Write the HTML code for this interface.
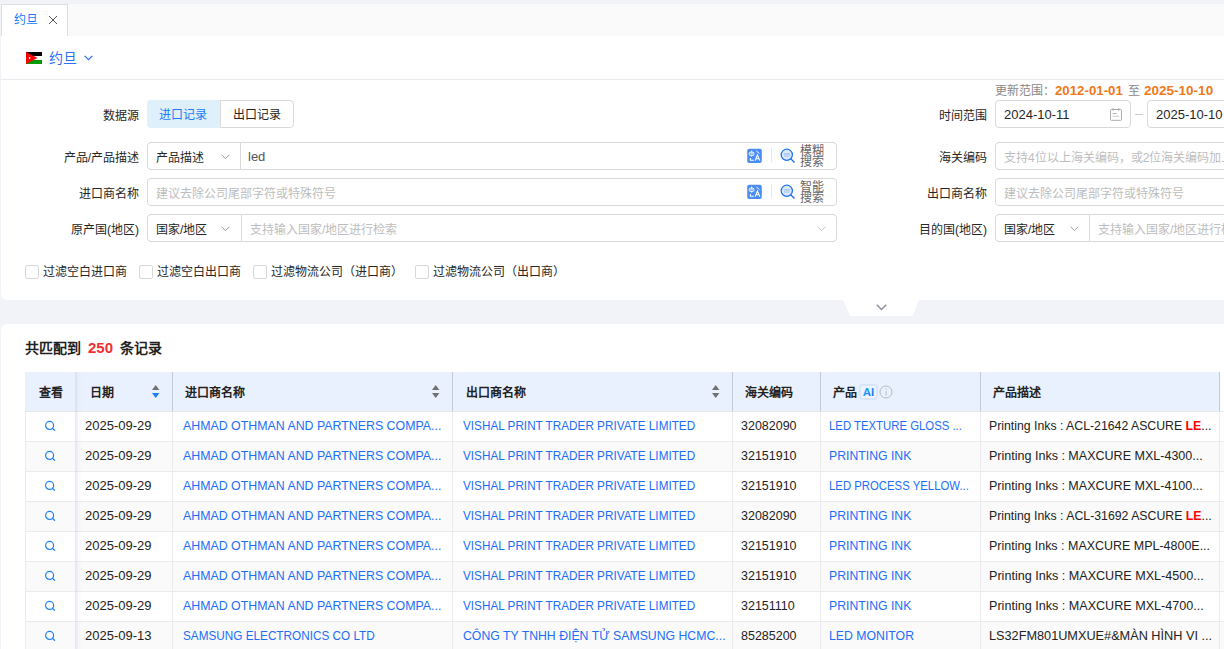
<!DOCTYPE html>
<html lang="zh-CN"><head><meta charset="utf-8">
<style>
*{box-sizing:border-box;margin:0;padding:0}
html,body{width:1224px;height:649px;overflow:hidden}
body{background:#f2f3f8;font-family:"Liberation Sans",sans-serif;font-size:12px;color:#262626;position:relative}
.a{position:absolute;white-space:nowrap;transform-origin:0 50%;line-height:16px}
.tabbar{position:absolute;left:1px;top:4px;width:1223px;height:32px;background:#fafafa}
.tab{position:absolute;left:1px;top:4px;width:67px;height:33px;background:#fff;border:1px solid #dedede;border-bottom:none}
.panel1{position:absolute;left:1px;top:36px;width:1240px;height:264px;background:#fff;border-radius:0 0 6px 6px}
.panel2{position:absolute;left:1px;top:324px;width:1240px;height:400px;background:#fff;border-radius:6px 6px 0 0}
.hline{position:absolute;left:1px;top:79px;width:1223px;height:1px;background:#ebebef}
.lbl{position:absolute;text-align:right;color:#262626;font-size:12px;line-height:32px;height:28px;white-space:nowrap}
.box{position:absolute;height:28px;border:1px solid #d9d9d9;border-radius:4px;background:#fff}
.ph{color:#bdbdbd}
.chev{position:absolute;width:7px;height:7px;border-right:1px solid #9a9ca5;border-bottom:1px solid #9a9ca5;transform:rotate(45deg)}
.cb{position:absolute;width:14px;height:14px;border:1px solid #d9d9d9;border-radius:2px;background:#fff}
.tbl{position:absolute;left:25px;top:372px;width:1240px;border-collapse:collapse;table-layout:fixed}
.tbl th{height:39px;background:#ebf1fd;font-weight:bold;text-align:left;font-size:12px;color:#222;padding:0 0 0 13px;position:relative}
.tbl td{height:30px;font-size:13px;color:#222;padding:0 0 0 9px;border-bottom:1px solid #ececf0;border-right:1px solid #ececf0;white-space:nowrap;overflow:hidden}
.tbl tr:nth-child(odd) td{background:#fafafa}

.th{font-weight:bold;font-size:12px;color:#222}
.td{font-size:13px;color:#222}
.hl{color:#f00}
.td.lk{color:#1d6ef7}
</style></head><body>
<div class="tabbar"></div>
<div class="tab"></div>
<div class="a" style="left:14px;top:12px;font-size:12px;color:#1677ff">约旦</div>
<svg class="a" style="left:48px;top:15px" width="10" height="10" viewBox="0 0 10 10"><path d="M1,1 L9,9 M9,1 L1,9" stroke="#555" stroke-width="1" fill="none"/></svg>
<div class="panel1"></div>
<div class="panel2"></div>
<div class="hline"></div>

<!-- flag -->
<svg class="a" style="left:26px;top:52px" width="16" height="12" viewBox="0 0 16 12">
<rect width="16" height="4" fill="#000"/><rect y="4" width="16" height="4" fill="#fff"/><rect y="8" width="16" height="4" fill="#090"/>
<polygon points="0,0 11.5,6 0,12" fill="#f00"/><circle cx="3.6" cy="6" r="0.9" fill="#fff"/></svg>
<div class="a" style="left:49px;top:50px;font-size:14px;color:#2a6ff5">约旦</div>
<svg class="a" style="left:84px;top:55px" width="9" height="6" viewBox="0 0 9 6"><polyline points="0.7,0.8 4.5,4.6 8.3,0.8" stroke="#2a6ff5" stroke-width="1.2" fill="none"/></svg>

<!-- left form -->
<div class="lbl" style="left:0;width:139px;top:100px">数据源</div>
<div class="a" style="left:147px;top:100px;width:73px;height:28px;background:#dff0fa;border-radius:4px 0 0 4px"></div>
<div class="a" style="left:159px;top:107px;color:#1a7cf5">进口记录</div>
<div class="box" style="left:220px;top:100px;width:74px;border-radius:0 4px 4px 0;border-color:#d9d9d9"></div>
<div class="a" style="left:233px;top:107px;color:#222">出口记录</div>

<div class="lbl" style="left:0;width:139px;top:142px">产品/产品描述</div>
<div class="box" style="left:147px;top:142px;width:690px">
  <div class="a" style="left:8px;top:7px">产品描述</div>
  <svg class="a" style="left:73px;top:11px" width="9" height="6" viewBox="0 0 9 6"><polyline points="0.6,0.7 4.5,4.6 8.4,0.7" stroke="#9a9ca5" stroke-width="1" fill="none"/></svg>
  <div class="a" style="left:92px;top:-1px;width:1px;height:28px;background:#d9d9d9"></div>
  <div class="a" style="left:100px;top:6px;font-size:13px;color:#555">led</div>
  <svg class="a" style="left:599px;top:5px" width="16" height="16" viewBox="0 0 16 16"><rect x="0.2" y="0.7" width="14.6" height="14.4" rx="2" fill="#4b8cf5"/><rect x="2.3" y="4.2" width="4.6" height="3.2" rx="1" fill="none" stroke="#fff" stroke-width="1"/><path d="M4.6,2.6 V4.2 M4.6,7.4 V8.6 M3.3,5.8 H5.9" stroke="#fff" stroke-width="0.9" fill="none"/><path d="M3.4,10 V12.3 H6.8" stroke="#fff" stroke-width="1.1" fill="none"/><path d="M9.4,3 L12.4,5.6" stroke="#fff" stroke-width="1" fill="none"/><path d="M8.2,12.6 L10.4,7 L12.8,12.6 M9,10.8 H11.9" stroke="#fff" stroke-width="1.1" fill="none"/></svg>
  <div class="a" style="left:623px;top:5px;width:1px;height:14px;background:#e6e7eb"></div>
  <svg class="a" style="left:632px;top:5px" width="16" height="16" viewBox="0 0 16 16"><circle cx="6.8" cy="6.8" r="5.6" fill="#dce9fd" stroke="#1f72f0" stroke-width="1.3"/><path d="M3.8,5.8 H9.8 M3.8,8 H9.8" stroke="#9fbff5" stroke-width="1.2"/><line x1="10.8" y1="10.8" x2="14.5" y2="14.5" stroke="#1f72f0" stroke-width="1.4"/></svg>
  <div class="a" style="left:652px;top:3px;font-size:12px;line-height:11px;color:#666;white-space:normal;width:26px">模糊<br>搜索</div>
</div>

<div class="lbl" style="left:0;width:139px;top:178px">进口商名称</div>
<div class="box" style="left:147px;top:178px;width:690px">
  <div class="a ph" style="left:8px;top:7px">建议去除公司尾部字符或特殊符号</div>
  <svg class="a" style="left:599px;top:5px" width="16" height="16" viewBox="0 0 16 16"><rect x="0.2" y="0.7" width="14.6" height="14.4" rx="2" fill="#4b8cf5"/><rect x="2.3" y="4.2" width="4.6" height="3.2" rx="1" fill="none" stroke="#fff" stroke-width="1"/><path d="M4.6,2.6 V4.2 M4.6,7.4 V8.6 M3.3,5.8 H5.9" stroke="#fff" stroke-width="0.9" fill="none"/><path d="M3.4,10 V12.3 H6.8" stroke="#fff" stroke-width="1.1" fill="none"/><path d="M9.4,3 L12.4,5.6" stroke="#fff" stroke-width="1" fill="none"/><path d="M8.2,12.6 L10.4,7 L12.8,12.6 M9,10.8 H11.9" stroke="#fff" stroke-width="1.1" fill="none"/></svg>
  <div class="a" style="left:623px;top:5px;width:1px;height:14px;background:#e6e7eb"></div>
  <svg class="a" style="left:632px;top:5px" width="16" height="16" viewBox="0 0 16 16"><circle cx="6.8" cy="6.8" r="5.6" fill="#dce9fd" stroke="#1f72f0" stroke-width="1.3"/><path d="M3.8,5.8 H9.8 M3.8,8 H9.8" stroke="#9fbff5" stroke-width="1.2"/><line x1="10.8" y1="10.8" x2="14.5" y2="14.5" stroke="#1f72f0" stroke-width="1.4"/></svg>
  <div class="a" style="left:652px;top:3px;font-size:12px;line-height:11px;color:#666;white-space:normal;width:26px">智能<br>搜索</div>
</div>

<div class="lbl" style="left:0;width:139px;top:214px">原产国(地区)</div>
<div class="box" style="left:147px;top:214px;width:690px">
  <div class="a" style="left:8px;top:7px">国家/地区</div>
  <svg class="a" style="left:73px;top:11px" width="9" height="6" viewBox="0 0 9 6"><polyline points="0.6,0.7 4.5,4.6 8.4,0.7" stroke="#9a9ca5" stroke-width="1" fill="none"/></svg>
  <div class="a" style="left:93px;top:-1px;width:1px;height:28px;background:#d9d9d9"></div>
  <div class="a ph" style="left:102px;top:7px">支持输入国家/地区进行检索</div>
  <svg class="a" style="left:669px;top:11px" width="9" height="6" viewBox="0 0 9 6"><polyline points="0.6,0.7 4.5,4.6 8.4,0.7" stroke="#c3c5cc" stroke-width="1" fill="none"/></svg>
</div>

<!-- right form -->
<div class="a" style="left:995px;top:83px;color:#888">更新范围：</div>
<div class="a" style="left:1055px;top:83px;color:#f07818;font-size:13px;font-weight:bold;transform:scaleX(1.02)">2012-01-01</div>
<div class="a" style="left:1128px;top:83px;color:#888">至</div>
<div class="a" style="left:1144px;top:83px;color:#f07818;font-size:13px;font-weight:bold;transform:scaleX(1.04)">2025-10-10</div>
<div class="lbl" style="left:880px;width:107px;top:100px">时间范围</div>
<div class="box" style="left:995px;top:100px;width:136px">
  <div class="a" style="left:8px;top:6px;font-size:13px">2024-10-11</div>
  <svg class="a" style="left:114px;top:7px" width="13" height="13" viewBox="0 0 13 13"><rect x="0.5" y="1.5" width="11" height="10.8" rx="0.8" fill="none" stroke="#a9a9ad" stroke-width="1"/><path d="M3,0.3 V2.5 M8.6,0.3 V2.5" stroke="#a9a9ad" stroke-width="1.2"/><path d="M2.6,5.5 H6.6" stroke="#a9a9ad" stroke-width="0.9"/><path d="M2.6,8.2 H9.2" stroke="#c4c4c8" stroke-width="0.9"/></svg>
</div>
<div class="a" style="left:1135px;top:114px;width:8px;height:1px;background:#ccc"></div>
<div class="box" style="left:1147px;top:100px;width:120px">
  <div class="a" style="left:8px;top:6px;font-size:13px">2025-10-10</div>
</div>
<div class="lbl" style="left:880px;width:107px;top:142px">海关编码</div>
<div class="box" style="left:995px;top:142px;width:260px">
  <div class="a ph" style="left:8px;top:7px">支持4位以上海关编码，或2位海关编码加上</div>
</div>
<div class="lbl" style="left:880px;width:107px;top:178px">出口商名称</div>
<div class="box" style="left:995px;top:178px;width:260px">
  <div class="a ph" style="left:8px;top:7px">建议去除公司尾部字符或特殊符号</div>
</div>
<div class="lbl" style="left:880px;width:107px;top:214px">目的国(地区)</div>
<div class="box" style="left:995px;top:214px;width:260px">
  <div class="a" style="left:8px;top:7px">国家/地区</div>
  <svg class="a" style="left:74px;top:11px" width="9" height="6" viewBox="0 0 9 6"><polyline points="0.6,0.7 4.5,4.6 8.4,0.7" stroke="#9a9ca5" stroke-width="1" fill="none"/></svg>
  <div class="a" style="left:93px;top:-1px;width:1px;height:28px;background:#d9d9d9"></div>
  <div class="a ph" style="left:102px;top:7px">支持输入国家/地区进行检索</div>
</div>

<!-- checkboxes -->
<div class="cb" style="left:25px;top:265px"></div><div class="a" style="left:43px;top:264px">过滤空白进口商</div>
<div class="cb" style="left:139px;top:265px"></div><div class="a" style="left:157px;top:264px">过滤空白出口商</div>
<div class="cb" style="left:253px;top:265px"></div><div class="a" style="left:271px;top:264px">过滤物流公司（进口商）</div>
<div class="cb" style="left:415px;top:265px"></div><div class="a" style="left:433px;top:264px">过滤物流公司（出口商）</div>

<!-- notch -->
<svg class="a" style="left:843px;top:300px" width="76" height="16" viewBox="0 0 76 16"><polygon points="0,0 76,0 69.5,16 7,16" fill="#fff"/></svg>
<svg class="a" style="left:876px;top:304px" width="11" height="7" viewBox="0 0 11 7"><polyline points="0.8,0.8 5.5,5.5 10.2,0.8" stroke="#8a8aa0" stroke-width="1.4" fill="none"/></svg>

<!-- results -->
<div class="a" style="left:25px;top:340px;font-size:14px;font-weight:bold;color:#1f1f1f">共匹配到<span style="color:#f03030;font-size:15px;margin:0 7px 0 7px">250</span>条记录</div>

<!--TABLE-->
<div class="a" style="left:25px;top:372px;width:1195px;height:39px;background:#e9f0fe"></div>
<div class="a" style="left:172px;top:372px;width:1px;height:39px;background:#c5c9d3"></div>
<div class="a" style="left:452px;top:372px;width:1px;height:39px;background:#c5c9d3"></div>
<div class="a" style="left:732px;top:372px;width:1px;height:39px;background:#c5c9d3"></div>
<div class="a" style="left:820px;top:372px;width:1px;height:39px;background:#c5c9d3"></div>
<div class="a" style="left:980px;top:372px;width:1px;height:39px;background:#c5c9d3"></div>
<div class="a" style="left:1219px;top:372px;width:1px;height:39px;background:#c5c9d3"></div>
<div class="a th" style="left:39px;top:385px">查看</div>
<div class="a th" style="left:90px;top:385px">日期</div>
<div class="a th" style="left:185px;top:385px">进口商名称</div>
<div class="a th" style="left:466px;top:385px">出口商名称</div>
<div class="a th" style="left:745px;top:385px">海关编码</div>
<div class="a th" style="left:833px;top:385px">产品</div>
<div class="a th" style="left:993px;top:385px">产品描述</div>
<svg class="a" style="left:152px;top:384px" width="8" height="15" viewBox="0 0 8 15"><polygon points="3.7,0.9 7.4,5.9 0,5.9" fill="#707070"/><polygon points="0,9 7.4,9 3.7,14" fill="#1d80f2"/></svg>
<svg class="a" style="left:432px;top:384px" width="8" height="15" viewBox="0 0 8 15"><polygon points="3.7,0.9 7.4,5.9 0,5.9" fill="#707070"/><polygon points="0,9 7.4,9 3.7,14" fill="#707070"/></svg>
<svg class="a" style="left:712px;top:384px" width="8" height="15" viewBox="0 0 8 15"><polygon points="3.7,0.9 7.4,5.9 0,5.9" fill="#707070"/><polygon points="0,9 7.4,9 3.7,14" fill="#707070"/></svg>
<svg class="a" style="left:859px;top:384px" width="19" height="16" viewBox="0 0 19 16"><defs><linearGradient id="aig" x1="0" y1="0" x2="1" y2="1"><stop offset="0" stop-color="#16c2f0"/><stop offset="1" stop-color="#1d5cf5"/></linearGradient></defs><rect x="1" y="1" width="17" height="14" rx="2" fill="#eef4ff" stroke="#c9dafc" stroke-width="1"/><text x="9.5" y="12.3" text-anchor="middle" font-family="Liberation Sans" font-weight="bold" font-size="11.5" fill="url(#aig)">AI</text></svg>
<svg class="a" style="left:879px;top:385px" width="14" height="14" viewBox="0 0 14 14"><circle cx="7" cy="7" r="6" fill="none" stroke="#b8bbc4" stroke-width="1"/><rect x="6.5" y="6" width="1" height="4.5" fill="#b8bbc4"/><rect x="6.5" y="3.5" width="1" height="1.2" fill="#b8bbc4"/></svg>
<div class="a" style="left:25px;top:411px;width:1240px;height:1px;background:#e6e7ea"></div>
<div class="a" style="left:25px;top:412px;width:1240px;height:29px;background:#fff"></div>
<div class="a" style="left:25px;top:441px;width:1240px;height:1px;background:#ebebef"></div>
<div class="a" style="left:25px;top:442px;width:1240px;height:29px;background:#fafafa"></div>
<div class="a" style="left:25px;top:471px;width:1240px;height:1px;background:#ebebef"></div>
<div class="a" style="left:25px;top:472px;width:1240px;height:29px;background:#fff"></div>
<div class="a" style="left:25px;top:501px;width:1240px;height:1px;background:#ebebef"></div>
<div class="a" style="left:25px;top:502px;width:1240px;height:29px;background:#fafafa"></div>
<div class="a" style="left:25px;top:531px;width:1240px;height:1px;background:#ebebef"></div>
<div class="a" style="left:25px;top:532px;width:1240px;height:29px;background:#fff"></div>
<div class="a" style="left:25px;top:561px;width:1240px;height:1px;background:#ebebef"></div>
<div class="a" style="left:25px;top:562px;width:1240px;height:29px;background:#fafafa"></div>
<div class="a" style="left:25px;top:591px;width:1240px;height:1px;background:#ebebef"></div>
<div class="a" style="left:25px;top:592px;width:1240px;height:29px;background:#fff"></div>
<div class="a" style="left:25px;top:621px;width:1240px;height:1px;background:#ebebef"></div>
<div class="a" style="left:25px;top:622px;width:1240px;height:29px;background:#fafafa"></div>
<div class="a" style="left:25px;top:651px;width:1240px;height:1px;background:#ebebef"></div>
<div class="a" style="left:25px;top:411px;width:1px;height:240px;background:#ebebef"></div>
<div class="a" style="left:172px;top:411px;width:1px;height:240px;background:#ebebef"></div>
<div class="a" style="left:452px;top:411px;width:1px;height:240px;background:#ebebef"></div>
<div class="a" style="left:732px;top:411px;width:1px;height:240px;background:#ebebef"></div>
<div class="a" style="left:820px;top:411px;width:1px;height:240px;background:#ebebef"></div>
<div class="a" style="left:980px;top:411px;width:1px;height:240px;background:#ebebef"></div>
<div class="a" style="left:1219px;top:411px;width:1px;height:240px;background:#ebebef"></div>
<div class="a" style="left:75px;top:372px;width:7px;height:280px;background:linear-gradient(to right,rgba(200,203,220,0.45),rgba(220,222,235,0.15) 50%,rgba(230,232,240,0))"></div>
<svg class="a" style="left:44px;top:420px" width="12" height="12" viewBox="0 0 12 12"><circle cx="5.6" cy="5.4" r="4" fill="none" stroke="#1a80f5" stroke-width="1.2"/><line x1="8.4" y1="8.2" x2="10.6" y2="10.4" stroke="#1a80f5" stroke-width="1.3" stroke-linecap="round"/></svg>
<div class="a td " style="left:85px;top:418px">2025-09-29</div>
<div class="a td lk" style="left:183px;top:418px;transform:scaleX(0.9513)">AHMAD OTHMAN AND PARTNERS COMPA...</div>
<div class="a td lk" style="left:463px;top:418px;transform:scaleX(0.9027)">VISHAL PRINT TRADER PRIVATE LIMITED</div>
<div class="a td" style="left:741px;top:418px;transform:scaleX(0.96)">32082090</div>
<div class="a td lk" style="left:829px;top:418px;transform:scaleX(0.8733)">LED TEXTURE GLOSS ...</div>
<div class="a td " style="left:989px;top:418px;transform:scaleX(0.9444)">Printing Inks : ACL-21642 ASCURE <b style="color:#f00">LE</b>...</div>
<svg class="a" style="left:44px;top:450px" width="12" height="12" viewBox="0 0 12 12"><circle cx="5.6" cy="5.4" r="4" fill="none" stroke="#1a80f5" stroke-width="1.2"/><line x1="8.4" y1="8.2" x2="10.6" y2="10.4" stroke="#1a80f5" stroke-width="1.3" stroke-linecap="round"/></svg>
<div class="a td " style="left:85px;top:448px">2025-09-29</div>
<div class="a td lk" style="left:183px;top:448px;transform:scaleX(0.9513)">AHMAD OTHMAN AND PARTNERS COMPA...</div>
<div class="a td lk" style="left:463px;top:448px;transform:scaleX(0.9027)">VISHAL PRINT TRADER PRIVATE LIMITED</div>
<div class="a td" style="left:741px;top:448px;transform:scaleX(0.96)">32151910</div>
<div class="a td lk" style="left:829px;top:448px;transform:scaleX(0.9419)">PRINTING INK</div>
<div class="a td " style="left:989px;top:448px;transform:scaleX(0.9636)">Printing Inks : MAXCURE MXL-4300...</div>
<svg class="a" style="left:44px;top:480px" width="12" height="12" viewBox="0 0 12 12"><circle cx="5.6" cy="5.4" r="4" fill="none" stroke="#1a80f5" stroke-width="1.2"/><line x1="8.4" y1="8.2" x2="10.6" y2="10.4" stroke="#1a80f5" stroke-width="1.3" stroke-linecap="round"/></svg>
<div class="a td " style="left:85px;top:478px">2025-09-29</div>
<div class="a td lk" style="left:183px;top:478px;transform:scaleX(0.9513)">AHMAD OTHMAN AND PARTNERS COMPA...</div>
<div class="a td lk" style="left:463px;top:478px;transform:scaleX(0.9027)">VISHAL PRINT TRADER PRIVATE LIMITED</div>
<div class="a td" style="left:741px;top:478px;transform:scaleX(0.96)">32151910</div>
<div class="a td lk" style="left:829px;top:478px;transform:scaleX(0.8734)">LED PROCESS YELLOW...</div>
<div class="a td " style="left:989px;top:478px;transform:scaleX(0.9636)">Printing Inks : MAXCURE MXL-4100...</div>
<svg class="a" style="left:44px;top:510px" width="12" height="12" viewBox="0 0 12 12"><circle cx="5.6" cy="5.4" r="4" fill="none" stroke="#1a80f5" stroke-width="1.2"/><line x1="8.4" y1="8.2" x2="10.6" y2="10.4" stroke="#1a80f5" stroke-width="1.3" stroke-linecap="round"/></svg>
<div class="a td " style="left:85px;top:508px">2025-09-29</div>
<div class="a td lk" style="left:183px;top:508px;transform:scaleX(0.9513)">AHMAD OTHMAN AND PARTNERS COMPA...</div>
<div class="a td lk" style="left:463px;top:508px;transform:scaleX(0.9027)">VISHAL PRINT TRADER PRIVATE LIMITED</div>
<div class="a td" style="left:741px;top:508px;transform:scaleX(0.96)">32082090</div>
<div class="a td lk" style="left:829px;top:508px;transform:scaleX(0.9419)">PRINTING INK</div>
<div class="a td " style="left:989px;top:508px;transform:scaleX(0.9457)">Printing Inks : ACL-31692 ASCURE <b style="color:#f00">LE</b>...</div>
<svg class="a" style="left:44px;top:540px" width="12" height="12" viewBox="0 0 12 12"><circle cx="5.6" cy="5.4" r="4" fill="none" stroke="#1a80f5" stroke-width="1.2"/><line x1="8.4" y1="8.2" x2="10.6" y2="10.4" stroke="#1a80f5" stroke-width="1.3" stroke-linecap="round"/></svg>
<div class="a td " style="left:85px;top:538px">2025-09-29</div>
<div class="a td lk" style="left:183px;top:538px;transform:scaleX(0.9513)">AHMAD OTHMAN AND PARTNERS COMPA...</div>
<div class="a td lk" style="left:463px;top:538px;transform:scaleX(0.9027)">VISHAL PRINT TRADER PRIVATE LIMITED</div>
<div class="a td" style="left:741px;top:538px;transform:scaleX(0.96)">32151910</div>
<div class="a td lk" style="left:829px;top:538px;transform:scaleX(0.9419)">PRINTING INK</div>
<div class="a td " style="left:989px;top:538px;transform:scaleX(0.9590)">Printing Inks : MAXCURE MPL-4800E...</div>
<svg class="a" style="left:44px;top:570px" width="12" height="12" viewBox="0 0 12 12"><circle cx="5.6" cy="5.4" r="4" fill="none" stroke="#1a80f5" stroke-width="1.2"/><line x1="8.4" y1="8.2" x2="10.6" y2="10.4" stroke="#1a80f5" stroke-width="1.3" stroke-linecap="round"/></svg>
<div class="a td " style="left:85px;top:568px">2025-09-29</div>
<div class="a td lk" style="left:183px;top:568px;transform:scaleX(0.9513)">AHMAD OTHMAN AND PARTNERS COMPA...</div>
<div class="a td lk" style="left:463px;top:568px;transform:scaleX(0.9027)">VISHAL PRINT TRADER PRIVATE LIMITED</div>
<div class="a td" style="left:741px;top:568px;transform:scaleX(0.96)">32151910</div>
<div class="a td lk" style="left:829px;top:568px;transform:scaleX(0.9419)">PRINTING INK</div>
<div class="a td " style="left:989px;top:568px;transform:scaleX(0.9682)">Printing Inks : MAXCURE MXL-4500...</div>
<svg class="a" style="left:44px;top:600px" width="12" height="12" viewBox="0 0 12 12"><circle cx="5.6" cy="5.4" r="4" fill="none" stroke="#1a80f5" stroke-width="1.2"/><line x1="8.4" y1="8.2" x2="10.6" y2="10.4" stroke="#1a80f5" stroke-width="1.3" stroke-linecap="round"/></svg>
<div class="a td " style="left:85px;top:598px">2025-09-29</div>
<div class="a td lk" style="left:183px;top:598px;transform:scaleX(0.9513)">AHMAD OTHMAN AND PARTNERS COMPA...</div>
<div class="a td lk" style="left:463px;top:598px;transform:scaleX(0.9027)">VISHAL PRINT TRADER PRIVATE LIMITED</div>
<div class="a td" style="left:741px;top:598px;transform:scaleX(0.96)">32151110</div>
<div class="a td lk" style="left:829px;top:598px;transform:scaleX(0.9419)">PRINTING INK</div>
<div class="a td " style="left:989px;top:598px;transform:scaleX(0.9682)">Printing Inks : MAXCURE MXL-4700...</div>
<svg class="a" style="left:44px;top:630px" width="12" height="12" viewBox="0 0 12 12"><circle cx="5.6" cy="5.4" r="4" fill="none" stroke="#1a80f5" stroke-width="1.2"/><line x1="8.4" y1="8.2" x2="10.6" y2="10.4" stroke="#1a80f5" stroke-width="1.3" stroke-linecap="round"/></svg>
<div class="a td " style="left:85px;top:628px">2025-09-13</div>
<div class="a td lk" style="left:183px;top:628px;transform:scaleX(0.9038)">SAMSUNG ELECTRONICS CO LTD</div>
<div class="a td lk" style="left:463px;top:628px;transform:scaleX(0.9440)">CÔNG TY TNHH ĐIỆN TỬ SAMSUNG HCMC...</div>
<div class="a td" style="left:741px;top:628px;transform:scaleX(0.96)">85285200</div>
<div class="a td lk" style="left:829px;top:628px;transform:scaleX(0.9438)">LED MONITOR</div>
<div class="a td " style="left:989px;top:628px;transform:scaleX(0.9771)">LS32FM801UMXUE#&amp;MÀN HÌNH VI ...</div>
<!--/TABLE-->
</body></html>
